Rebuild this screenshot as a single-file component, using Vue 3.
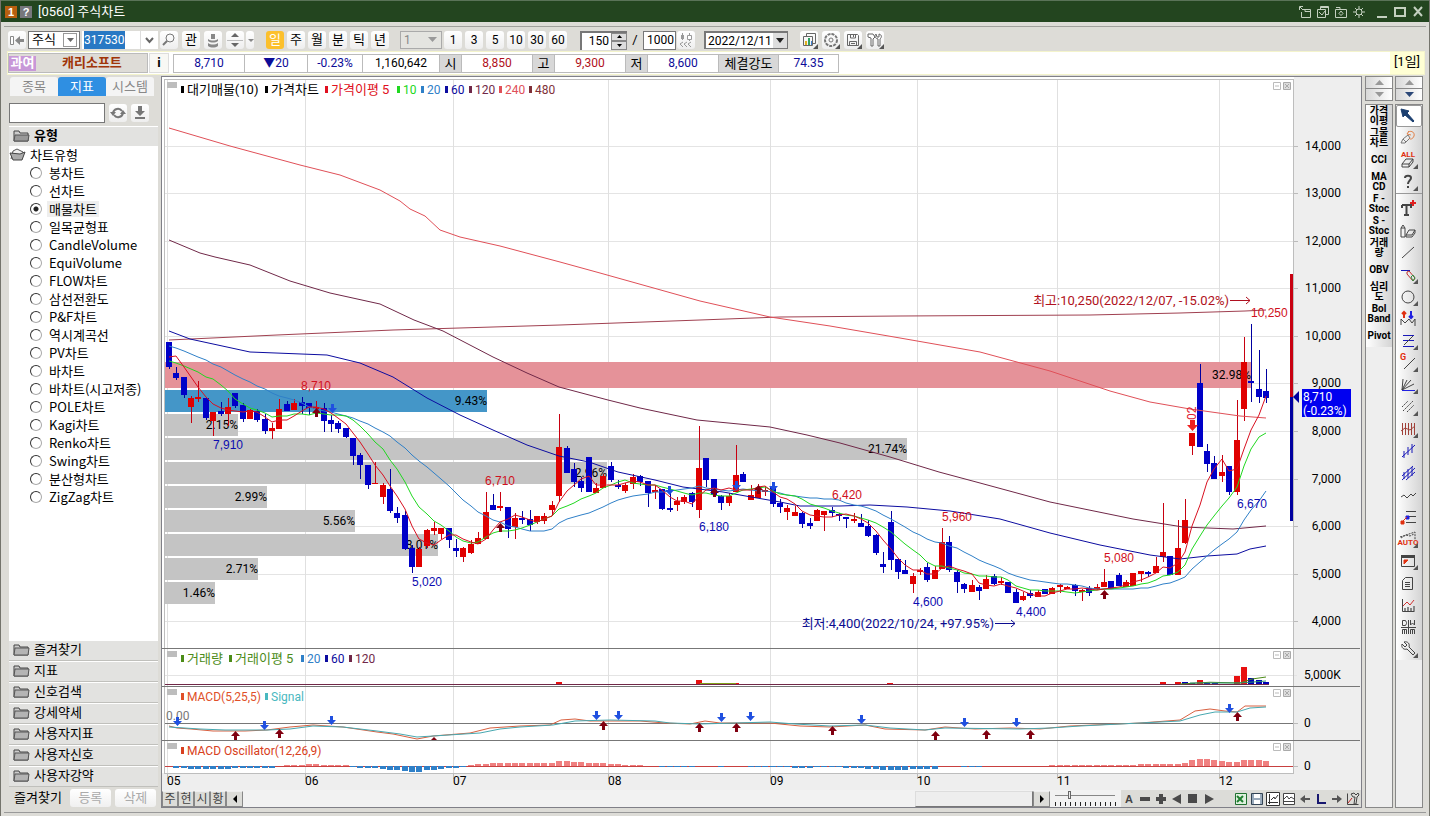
<script setup>
import { ref } from 'vue'

const code = ref('317530')
const market = ref('주식')
const minute = ref('1')
const count = ref('150')
const total = ref('1000')
const date = ref('2022/12/11')
const keyword = ref('')
const chartType = ref('매물차트')
const zoom = ref(14)

const periods = ['일', '주', '월', '분', '틱', '년']
const minutes = ['1', '3', '5', '10', '30', '60']

const quote = [
  { t: '8,710', w: 71, c: 'down' },
  { t: '▼20', w: 63, c: 'down' },
  { t: '-0.23%', w: 55, c: 'down' },
  { t: '1,160,642', w: 77, c: '' },
  { t: '시', w: 22, c: 'head' },
  { t: '8,850', w: 71, c: 'up' },
  { t: '고', w: 22, c: 'head' },
  { t: '9,300', w: 71, c: 'up' },
  { t: '저', w: 22, c: 'head' },
  { t: '8,600', w: 71, c: 'down' },
  { t: '체결강도', w: 60, c: 'head' },
  { t: '74.35', w: 59, c: 'down' },
]

const types = ['봉차트', '선차트', '매물차트', '일목균형표', 'CandleVolume', 'EquiVolume', 'FLOW차트', '삼선전환도', 'P&F차트', '역시계곡선', 'PV차트', '바차트', '바차트(시고저종)', 'POLE차트', 'Kagi차트', 'Renko차트', 'Swing차트', '분산형차트', 'ZigZag차트']
const folders = ['즐겨찾기', '지표', '신호검색', '강세약세', '사용자지표', '사용자신호', '사용자강약']
const quick = [['가격', '이평'], ['그물', '차트'], ['CCI'], ['MA', 'CD'], ['F -', 'Stoc'], ['S -', 'Stoc'], ['거래', '량'], ['OBV'], ['심리', '도'], ['Bol', 'Band'], ['Pivot']]

const G = '#444'
const R = '#e03010'
const B = '#1818b8'
const tools = [
  { n: '선택', s: [{ d: 'M3 3l8 2-2 2 7 8-1 1-8-7-2 2z', f: '#1c3f70', c: '#1c3f70' }] },
  { n: '지우기', s: [{ d: 'M3 15l2-4 5-4 2 3-5 5zM5 11l3 3', c: '#777' }, { d: 'M9 6l2-3M9 6l4 1M10 4c4-2 7 1 6 4s-4 4-5 2', c: '#e08048' }] },
  { n: '전체 지우기', m: 1, t: 'ALL', tc: R, ty: 7, ts: 8, s: [{ d: 'M4 14l4-5h7l-4 5zM4 14v3h7l4-5V9M11 14v3', c: G }] },
  { n: '도움말', m: 1, s: [{ d: 'M7 6c0-3 6-3 6 0 0 2-3 3-3 6M10 14v2', c: G, w: 2 }] },
  { n: '문자', sep: 1, s: [{ d: 'M4 6h9v3M4 9V6M8.500 6v10M6 16h5', c: G, w: 2 }, { d: 'M15 1v6M12 4h6', c: '#e02020', w: 2 }] },
  { n: '도형', s: [{ d: 'M3 7l2-3 2 3v9H3zM3 7h4', c: G }, { d: 'M8 14l3-5h6l-3 5zM8 14v2h6l3-4V9', c: G }] },
  { n: '추세선', s: [{ d: 'M4 15L16 4', c: G }] },
  { n: '수평선', m: 1, s: [{ d: 'M3 5.500h9', c: B }, { d: 'M9 7l2-1 6 7-2 3-6-7z', c: '#c03030' }, { d: 'M13 12l2-2 2 3-2 3z', c: '#309040' }] },
  { n: '원', m: 1, s: [{ d: 'M10 4a6 6 0 1 1 0 12a6 6 0 1 1 0-12', c: G }] },
  { n: '패턴', s: [{ d: 'M3 16v-6l4 4 4-4 3 4 3-4v7', c: G }, { d: 'M6 9V3M4 5l2-2 2 2', c: R, w: 2 }, { d: 'M13 2v7M11 7l2 2 2-2', c: '#2020e0', w: 2 }] },
  { n: '피보나치', m: 1, s: [{ d: 'M5 4.500h11M5 9.500h11M5 15.500h11', c: B }, { d: 'M15 5L6 14', c: G }] },
  { n: '갠 라인', m: 1, t: 'G', tc: R, ty: 7, tx: 5, ts: 9, s: [{ d: 'M6 16L17 5', c: G }] },
  { n: '갠 팬', m: 1, s: [{ d: 'M4 15L5 4M4 15l5-10M4 15L13 5M4 15l12-6', c: G }, { d: 'M4 15.500h13', c: '#2020e0' }] },
  { n: '평행선', m: 1, s: [{ d: 'M4 10l6-6M5 14L15 4M9 15l7-7', c: G, dash: '2 1' }] },
  { n: '시간대', m: 1, s: [{ d: 'M4.500 4v12M7.500 4v12M10.500 4v12M13.500 4v12M16.500 4v12M3 12l4-3 5 2 5-4', c: '#a04038' }] },
  { n: '회귀선', s: [{ d: 'M4 16L17 4M6 10v7M10 6v8M14 3v9', c: B }] },
  { n: '회귀채널', s: [{ d: 'M4 13L15 3M4 17L17 5M8 17l9-8M6 9v7M10 6v9M14 4v9', c: B }] },
  { n: '지그재그', s: [{ d: 'M3 12l3-2 3 3 4-4 2 2 3-3', c: G }] },
  { n: '분할선', s: [{ d: 'M8 4.500h10M10 9.500h8M8 15.500h10', c: G }, { d: 'M3 14h3v3H3z', f: R, c: R }, { d: 'M8 9h3v3H8z', f: '#2020e0', c: '#2020e0' }, { d: 'M5 14l4-4', c: R }] },
  { n: '자동추세', m: 1, t: 'AUTO', tc: R, ty: 16, ts: 8, s: [{ d: 'M2 8L17 3v8M3 9l5-3 4 1 4-2', c: G, dash: '2 1' }] },
  { n: '창', m: 1, s: [{ d: 'M3.500 4.500h13v11h-13z', c: G }, { d: 'M3 5.500h14', c: G, w: 3 }, { d: 'M6 9h4l-4 4z', f: R, c: R }] },
  { n: '메모', s: [{ d: 'M4.500 7.500l3-3h7v12h-10zM7 9.500h5M7 11.500h5M7 13.500h5', c: G }] },
  { n: '차트', s: [{ d: 'M4.500 4v12.500h12', c: G }, { d: 'M5 11l4-4 3 3 4-5', c: '#d03030' }, { d: 'M7 16v-3M10 16v-4M13 16v-3M16 16v-5', c: '#888', w: 2 }] },
  { n: '일주월분', s: [{ d: 'M4.500 3.500h3l1 2v1l-1 2h-3zM12.500 3v5l2-2 2 2V3M4.500 17v-4.500h4V17M6.500 13v4M12.500 17v-4.500h4V17M14.500 13v4M10.500 3v14M3 10.500h15', c: G }] },
  { n: '설정', m: 1, s: [{ d: 'M4 5l3 3 2-2-3-3c4-1 6 2 5 5l6 6-2 2-6-6c-3 1-6-1-5-5z', c: G }] },
]

/* colour, high, body top, body bottom, low (vertical positions on the sheet) */
const candles = `b342,342,367,369 b367,373,378,380 b377,377,395,398 r396,398,407,423 r381,397,399,402 b397,398,418,420 r412,412,421,436 b402,411,414,416 r398,407,414,426 b393,393,406,408
b403,405,419,422 r409,410,419,419 b409,411,420,422 b414,419,431,434 r423,428,431,439 r399,409,429,429 b401,404,411,411 r399,403,410,410 b397,402,406,414 b403,403,408,415
r401,407,409,412 b403,408,421,432 b415,420,424,432 b421,423,429,433 b428,428,437,438 b438,438,456,465 b453,455,465,479 b465,465,485,489 r462,483,484,484 r483,485,497,504
b469,489,511,513 b507,513,518,523 b511,515,549,550 b545,548,567,573 r547,549,567,567 r529,530,546,548 r522,528,531,535 r528,528,534,539 b528,528,540,548 b539,548,551,557
r547,548,557,562 r540,544,553,554 r532,538,544,544 r492,512,539,539 b494,505,510,510 r492,506,508,511 b507,507,529,538 r513,518,527,539 b511,518,520,524 b510,519,525,531
r516,516,522,524 r513,516,521,524 r501,505,510,515 r414,447,496,502 b446,448,473,473 b463,469,482,487 b477,481,488,492 b457,457,492,492 r483,488,493,493 r474,476,488,488
b462,466,480,482 b480,485,487,489 r483,485,491,493 r474,477,484,489 b475,476,482,486 b481,481,493,507 r485,490,492,499 b489,489,509,510 b492,508,510,512 r497,501,505,511
r495,497,502,504 b492,493,502,507 r426,468,510,518 b458,458,480,487 b479,479,495,497 b495,496,503,510 r493,496,503,506 r445,475,492,492 b472,474,482,482 r485,495,500,500
r484,488,498,498 r486,490,492,496 b487,487,504,507 b499,503,507,513 r505,508,512,520 r506,512,516,516 b512,513,524,528 b518,523,526,529 r509,510,521,521 r511,511,515,531
b507,510,513,517 b513,514,516,521 b517,517,519,528 r513,519,521,523 b514,523,527,527 b520,526,536,537 b534,535,553,555 b552,564,567,573 b511,522,560,570 b558,559,572,579
b560,570,574,574 r573,576,584,593 r568,570,572,575 b563,567,580,582 r566,570,579,579 r528,542,569,569 b536,542,570,572 b570,572,582,593 b583,584,589,593 r580,585,592,592
b585,587,591,600 r575,579,589,589 b574,576,584,585 r577,581,583,585 b582,582,593,593 b589,592,603,603 r592,596,600,601 b590,593,596,598 r590,592,597,597 b589,589,594,594
r587,588,594,594 r584,585,587,593 r586,587,589,589 b584,585,591,596 r589,590,592,601 b586,588,593,596 r584,587,589,590 r569,582,587,587 b581,581,589,589 b573,575,586,586
r580,582,587,587 r573,573,586,586 r571,571,574,582 b571,572,574,577 r557,566,573,573 r503,552,557,562 b556,556,575,575 r520,548,575,575 r499,520,543,544 r433,433,446,455
b364,383,447,447 b444,451,464,472 b456,463,479,479 r455,472,476,482 b466,466,492,495 r400,440,492,495 r337,362,409,421 b324,381,383,402 b350,389,397,403 b369,391,398,403`
  .split(/\s+/)
  .map((s, i) => {
    const [h, o, c, l] = s.slice(1).split(',').map(Number)
    return { x: Math.round(169 + i * 7.3624), up: s[0] === 'r', h, o, c, l }
  })

const closes = candles.map((k) => (k.up ? k.o : k.c))
function average(n, head) {
  return closes
    .map((_, i) => {
      const y = i < n - 1 ? head[i] : closes.slice(i - n + 1, i + 1).reduce((a, b) => a + b, 0) / n
      return `${candles[i].x},${Math.round(y)}`
    })
    .join(' ')
}
const lines = [
  { c: '#a04050', p: '169,340 277,335 393,330 560,325 700,320 780,317 900,316 1090,315 1180,313 1245,311 1266,310' },
  { c: '#e05058', p: '169,128 230,146 300,165 340,175 380,190 400,201 410,209 425,216 440,230 460,237 500,246 560,262 600,273 650,287 700,301 770,317 830,326 900,338 980,352 1050,371 1110,391 1150,402 1190,409 1240,416 1266,418' },
  { c: '#702848', p: '169,240 200,253 215,257 250,265 290,281 330,293 380,304 414,320 443,331 493,357 527,373 559,387 608,400 640,408 697,420 770,427 807,435 840,443 890,457 939,472 980,483 1050,502 1133,519 1183,527 1233,529 1266,526' },
  { c: '#0c0ca0', p: '169,331 190,339 250,352 327,355 360,363 393,377 427,398 460,415 493,430 527,445 559,456 589,462 618,472 655,480 683,487 723,492 757,498 780,502 800,506 840,506 870,505 907,507 950,511 1000,519 1050,533 1100,545 1150,555 1180,559 1207,556 1237,554 1250,549 1266,546' },
  { c: '#2f80c8', p: average(20, [346, 348, 351, 354, 357, 360, 364, 367, 371, 375, 379, 382, 386, 389, 393, 396, 398, 400, 403]) },
  { c: '#20d820', p: average(10, [361, 363, 366, 369, 372, 377, 379, 385, 391]) },
  { c: '#d81020', p: average(5, [357, 356, 367, 377]) },
]

const profile = [
  { y: 362, h: 26, x: 1251, t: '32.98%', c: '#e59299' },
  { y: 390, h: 22, x: 487, t: '9.43%', c: '#4496c8' },
  { y: 414, h: 22, x: 238, t: '2.15%' },
  { y: 438, h: 22, x: 907, t: '21.74%' },
  { y: 462, h: 22, x: 607, t: '2.96%' },
  { y: 486, h: 22, x: 267, t: '2.99%' },
  { y: 510, h: 22, x: 355, t: '5.56%' },
  { y: 534, h: 22, x: 438, t: '8.01%' },
  { y: 558, h: 22, x: 258, t: '2.71%' },
  { y: 582, h: 22, x: 215, t: '1.46%' },
]

const prices = Array.from({ length: 11 }, (_, i) => ({
  y: Math.round(145.5 + i * 47.58),
  t: `${14 - i},000`,
}))
const months = [[167, '05'], [305, '06'], [453, '07'], [608, '08'], [770, '09'], [917, '10'], [1057, '11'], [1219, '12']]

const legends = [
  [183, 94, '#000', '대기매물(10)', 1], [267, 94, '#000', '가격차트', 1], [327, 94, '#e01020', '가격이평  5', 1], [399, 94, '#20d820', '10'], [423, 94, '#2f80c8', '20'], [447, 94, '#0c0ca0', '60'], [471, 94, '#702848', '120'], [501, 94, '#e05058', '240'], [531, 94, '#803038', '480'],
  [183, 663, '#4c8c18', '거래량', 1], [231, 663, '#4c8c18', '거래이평  5', 1], [303, 663, '#2f80c8', '20'], [327, 663, '#0c0ca0', '60'], [351, 663, '#702848', '120'],
  [183, 701, '#e05028', 'MACD(5,25,5)'], [267, 701, '#48b8c0', 'Signal'],
  [183, 755, '#d84020', 'MACD Oscillator(12,26,9)'],
]

const tags = [
  [301, 390, 'hi', '8,710'], [213, 449, 'lo', '7,910'], [412, 586, 'lo', '5,020'], [485, 485, 'hi', '6,710'],
  [699, 531, 'lo', '6,180'], [832, 499, 'hi', '6,420'], [942, 521, 'hi', '5,960'], [913, 606, 'lo', '4,600'],
  [1016, 616, 'lo', '4,400'], [1104, 562, 'hi', '5,080'], [1237, 508, 'lo', '6,670'], [1251, 317, 'hi', '10,250'],
]

const downs = [[177, 721], [264, 725], [331, 720], [596, 715], [618, 715], [721, 717], [750, 716], [861, 719], [964, 722], [1016, 722], [1229, 708], [332, 408], [669, 490], [736, 485], [773, 486]]
const ups = [[235, 736], [279, 734], [603, 726], [699, 728], [736, 728], [832, 731], [935, 736], [986, 735], [1030, 735], [1237, 717], [316, 413], [500, 528], [714, 493], [758, 490], [1104, 595]]

const volumes = [[559, 682, 1], [699, 680, 1], [736, 683, 1], [890, 683, 1], [1163, 682, 1], [1178, 682, 1], [1185, 682, 0], [1192, 683, 0], [1200, 680, 1], [1207, 683, 0], [1215, 683, 0], [1237, 676, 1], [1244, 667, 1], [1251, 678, 0], [1259, 680, 0], [1266, 682, 0]]

const macd = '169,726 177,728 191,729 213,731 245,731 267,730 290,727 313,725 343,727 377,732 393,734 417,739 433,736 470,733 490,728 520,726 550,725 561,720 575,719 590,721 640,721 665,723 690,724 705,721 720,723 770,723 800,726 830,727 865,725 885,729 925,730 945,727 975,729 1010,728 1040,729 1070,726 1140,723 1180,720 1195,711 1210,709 1225,711 1237,712 1245,706 1266,706'
const signal = '169,727 200,729 225,730 267,730 290,729 313,726 343,727 377,731 400,734 417,737 433,736 480,733 500,729 520,727 553,725 575,721 610,720 655,721 670,723 700,724 770,722 795,724 830,726 865,725 890,728 925,730 945,728 1020,729 1050,728 1080,726 1140,723 1180,721 1200,715 1215,712 1237,712 1250,708 1266,707'

const osc = [0, -2, -2, -3, -3, -3, -3, -3, -3, -2, -2, -2, -2, -2, -2, 0, 1, 1, 1, 2, 2, 1, 1, 1, 1, -1, -2, -2, -2, -3, -4, -4, -5, -6, -6, -4, -4, -3, -2, -2, -1, 1, 2, 2, 3, 3, 3, 3, 3, 3, 3, 3, 3, 5, 5, 4, 4, 3, 3, 3, 2, 2, 1, 1, 1, 0, 0, -1, -1, -1, -1, -1, 0, 0, 0, -1, 0, 0, 0, -1, -1, -1, -1, -1, -1, -2, -2, -2, -1, -1, -1, -1, -2, -2, -2, -3, -3, -4, -4, -4, -4, -3, -3, -3, -3, 0, 0, 0, -1, -1, -1, 0, 0, 0, 0, 0, 0, 0, 0, 0, 1, 1, 1, 1, 1, 1, 1, 1, 1, 1, 1, 1, 2, 2, 2, 2, 2, 2, 3, 6, 7, 7, 6, 5, 4, 4, 6, 6, 6, 5]
const panes = [79, 648, 686, 740]
</script>

<template>
  <div class="window">
    <header class="title">
      <span class="mark">1</span><span class="mark help">?</span>
      <h1>[0560] 주식차트</h1>
      <div class="winbtns">
        <button aria-label="창 분리"><svg width="14" height="14"><path d="M4.500 4.500h8v8h-9V7M7 4v2.500h5M1.500 5V1.500H5M2 2l3 3" /></svg></button>
        <button aria-label="창 복사"><svg width="14" height="14"><path d="M1.500 4.500h8v8h-8zM4.500 4V1.500h8v8H10M3 7l3 3 3-4M4 2.500h8" /></svg></button>
        <button aria-label="캡처"><svg width="14" height="14"><path d="M1.500 4.500h11v8h-11zM2 2.500h4v2M7 6l2 2.500-2 2-2-2z" /></svg></button>
        <button aria-label="설정"><svg width="14" height="14"><path d="M7 4a3 3 0 1 1 0 6a3 3 0 1 1 0-6M7 1v3M7 10v3M1 7h3M10 7h3M3 3l2 2M9 9l2 2M3 11l2-2M9 5l2-2" /></svg></button>
        <button aria-label="최소화" class="big"><svg width="14" height="14"><path d="M2 12h10" stroke-width="2" /></svg></button>
        <button aria-label="최대화" class="big"><svg width="14" height="14"><path d="M2 3h10v8H2z" stroke-width="2" /></svg></button>
        <button aria-label="닫기" class="big"><svg width="14" height="14"><path d="M3 2l8 9M11 2l-8 9" stroke-width="2" /></svg></button>
      </div>
    </header>

    <div class="toolbar">
      <button class="tb" aria-label="처음"><svg width="16" height="14"><path d="M1.500 3.500h3v8h-3z" fill="#fff" stroke="#888" /><path d="M6 7.500L11 3v3h4v3h-4v3z" fill="#888" /></svg></button>
      <span class="pick market"><select v-model="market" aria-label="시장"><option>주식</option></select><i class="boxed"><svg width="9" height="5"><path d="M1 0h7L4.500 4z" fill="#666" /></svg></i></span>
      <span class="combo"><input v-model="code" aria-label="종목코드"><button aria-label="코드 목록"><svg width="9" height="7"><path d="M1 1l3.500 4L8 1" fill="none" stroke="#666" stroke-width="2" /></svg></button></span>
      <button class="tb" aria-label="검색"><svg width="14" height="14"><circle cx="8" cy="5" r="4" fill="none" stroke="#777" /><path d="M5 8l-4 4" stroke="#777" stroke-width="2" /></svg></button>
      <button class="tb gap">관</button>
      <button class="tb gap" aria-label="투자자"><svg width="14" height="16"><path d="M5 2h4v5H5zM2 7c3 2 7 2 10 0v2c-3 2-7 2-10 0zM2 11c3 2 7 2 10 0v3c-3 2-7 2-10 0z" fill="#888" /></svg></button>
      <button class="tb gap" aria-label="종목 이동"><svg width="16" height="18"><path d="M4 6l4-4 4 4zM4 12l4 4 4-4z" fill="#666" /><path d="M0 9.500h16" stroke="#bbb" /></svg></button>
      <button class="tb slim" aria-label="이동 목록"><svg width="7" height="5"><path d="M1 1h6L4 4z" fill="#888" /></svg></button>
      <div class="group periods">
        <button v-for="(p, i) in periods" :key="p" class="tb" :class="{ on: i === 0 }">{{ p }}</button>
      </div>
      <span class="pick minute"><select v-model="minute" aria-label="분 간격" disabled><option>1</option></select><i><svg width="9" height="6"><path d="M0 0h9L4.500 5z" fill="#999" /></svg></i></span>
      <div class="group mins">
        <button v-for="m in minutes" :key="m" class="tb">{{ m }}</button>
      </div>
      <span class="spin"><input v-model="count" aria-label="표시 개수"><span class="steps"><button aria-label="증가"><svg width="5" height="3"><path d="M0 3h5L2.500 0z" /></svg></button><button aria-label="감소"><svg width="5" height="3"><path d="M0 0h5L2.500 3z" /></svg></button></span></span>
      <span class="slash">/</span>
      <input v-model="total" class="total" aria-label="전체 개수">
      <button class="tb" aria-label="연속조회"><svg width="14" height="16"><path d="M3.500 1v7M10.500 1v8" stroke="#999" /><path d="M2 3h3v4H2z" fill="#999" /><path d="M8.500 3.500h4v4h-4z" fill="#fff" stroke="#999" /><path d="M4 10l-3 2 3 3M8 10l-3 2 3 3M12 10l-3 2 3 3" fill="none" stroke="#999" /></svg></button>
      <span class="pick date"><select v-model="date" aria-label="날짜"><option>2022/12/11</option></select><i><svg width="8" height="5"><path d="M0 0h8L4 5z" fill="#222" /></svg></i></span>
      <div class="group extras">
        <button class="tb" aria-label="차트 복사"><svg width="17" height="17"><path d="M5.500 4V1.500h9v10H12M2.500 4.500h9v9h-9z" fill="none" stroke="#666" /><path d="M4 9h2v4H4z" fill="#e0b020" /><path d="M7 6h2v7H7z" fill="#30a060" /><path d="M10 9h1v4h-1z" fill="#4080d0" /><path d="M17 12v5h-5z" fill="#555" /></svg></button>
        <button class="tb" aria-label="환경설정"><svg width="17" height="17"><circle cx="8" cy="8" r="6" fill="none" stroke="#777" stroke-width="2" stroke-dasharray="3 1" /><circle cx="8" cy="8" r="2" fill="none" stroke="#777" /><path d="M17 12v5h-5z" fill="#555" /></svg></button>
        <button class="tb" aria-label="저장"><svg width="17" height="17"><path d="M2.500 2.500h10l1 1v10h-11zM5.500 2v4h5V2M4.500 14V9.500h7V14M8.500 3v2M6 11.500h4" fill="none" stroke="#666" /><path d="M17 12v5h-5z" fill="#555" /></svg></button>
        <button class="tb" aria-label="도구"><svg width="17" height="17"><path d="M1 2h5l2 3-2 2v7H4V6L1 5zM9 2l1 3h2V2c3 1 3 3 1 5v7h-2V7C8 6 7 4 9 2z" fill="#fff" stroke="#666" /><path d="M17 12v5h-5z" fill="#555" /></svg></button>
      </div>
    </div>

    <div class="quote">
      <div class="stock"><span class="badge">과여</span><strong>캐리소프트</strong></div>
      <button class="info" aria-label="종목정보">i</button>
      <div class="cells">
        <span v-for="q in quote" :key="q.t" :class="q.c" :style="{ width: q.w + 'px' }">{{ q.t }}</span>
      </div>
      <span class="unit">[1일]</span>
    </div>

    <main class="main">
      <aside class="side">
        <nav class="tabs"><button>종목</button><button class="on">지표</button><button>시스템</button></nav>
        <div class="find">
          <input v-model="keyword" aria-label="지표 찾기">
          <button class="tb" aria-label="새로고침"><svg width="16" height="14"><path d="M3 7a5 5 0 0 1 9-2M13 7a5 5 0 0 1-9 2" fill="none" stroke="#777" stroke-width="2" /><path d="M0 6h6L3 10zM10 8h6l-3-4z" fill="#777" /></svg></button>
          <button class="tb" aria-label="내려받기"><svg width="14" height="16"><path d="M5 1h4v5h3l-5 5-5-5h3zM2 12h10v2H2z" fill="#777" /></svg></button>
        </div>
        <h2 class="bar"><svg width="17" height="13"><path d="M1 12V2h5l1 2h8v8z" fill="#ccc" stroke="#444" /><path d="M1 12l1-6h14l-1 6z" fill="#999" stroke="#555" /></svg>유형</h2>
        <div class="tree">
          <div class="root"><svg width="17" height="14"><path d="M2 11l2-8 4-2 6 3v4" fill="#eee" stroke="#555" /><path d="M1 5l10 1 5-2-3 8H4z" fill="#aaa" stroke="#444" /></svg>차트유형</div>
          <label v-for="t in types" :key="t" class="opt"><input v-model="chartType" type="radio" name="type" :value="t"><span :class="{ sel: chartType === t }">{{ t }}</span></label>
        </div>
        <button v-for="f in folders" :key="f" class="bar"><svg width="17" height="13"><path d="M1 12V2h5l1 2h8v8z" fill="#ccc" stroke="#444" /><path d="M1 12l1-7h14l-1 7z" fill="#b4b4b4" stroke="#555" /></svg>{{ f }}</button>
        <div class="foot"><span>즐겨찾기</span><button disabled>등록</button><button disabled>삭제</button></div>
      </aside>

      <section class="chart">
        <svg class="sheet" viewBox="162 77 1199 713" role="img" aria-label="캐리소프트 일봉 차트">
          <rect x="162" y="77" width="1199" height="713" fill="#eee" />
          <rect x="162" y="77" width="1132" height="696" fill="#fff" />
          <g shape-rendering="crispEdges" fill="none">
            <path v-for="p in prices" :key="p.t" :d="`M165 ${p.y}.5H1293`" stroke="#e4e4e4" />
            <path d="M165 675.5H1297" stroke="#e4e4e4" />
            <path v-for="m in months" :key="m[1]" :d="`M${m[0]}.5 80V773`" stroke="#e0e0e0" />
            <path v-for="p in prices" :key="'k' + p.t" :d="`M1293 ${p.y}.5h5`" stroke="#bbb" />
            <path v-for="m in months" :key="'k' + m[1]" :d="`M${m[0]}.5 773v6`" stroke="#bbb" />
            <path d="M164.500 773V79.500H1293.500V773.500H164" stroke="#bdbdbd" />
            <path d="M1293 723.5h5M1293 766.5h5" stroke="#bbb" />
          </g>
          <g class="num" text-anchor="end">
            <template v-for="b in profile" :key="b.t">
              <rect x="165" :y="b.y" :width="b.x - 165" :height="b.h" :fill="b.c || '#c4c4c4'" />
              <text :x="b.x" :y="b.y + (b.h > 22 ? 17 : 15)">{{ b.t }}</text>
            </template>
            <text v-for="p in prices" :key="p.t" x="1341" :y="p.y + 4">{{ p.t }}</text>
          </g>
          <g class="num">
            <text v-for="m in months" :key="m[1]" :x="m[0]" y="785">{{ m[1] }}</text>
            <text x="1304" y="679">5,000K</text>
            <text x="1304" y="727">0</text>
            <text x="1304" y="770">0</text>
          </g>
          <g shape-rendering="crispEdges">
            <template v-for="k in candles" :key="k.x">
              <rect :x="k.x" :y="k.h" width="1" :height="k.l - k.h" :fill="k.up ? '#c80010' : '#0000a0'" />
              <rect :x="k.x - 3" :y="k.o" width="6" :height="Math.max(1, k.c - k.o)" :fill="k.up ? '#e00000' : '#0000c8'" />
            </template>
          </g>
          <polyline v-for="l in lines" :key="l.c" :points="l.p" :stroke="l.c" class="line" />
          <g class="tag">
            <text v-for="t in tags" :key="t[3]" :x="t[0]" :y="t[1]" :class="t[2]">{{ t[3] }}</text>
          </g>
          <g class="num wide">
            <text x="1229" y="305" text-anchor="end" fill="#b01020">최고:10,250(2022/12/07, -15.02%)</text>
            <text x="994" y="628" text-anchor="end" fill="#0c0c90">최저:4,400(2022/10/24, +97.95%)</text>
          </g>
          <path d="M1230 300.500h20M1246 297l4 3.500-4 3.500" stroke="#b01020" fill="none" />
          <path d="M995 623.500h20M1011 620l4 3.500-4 3.500" stroke="#0c0c90" fill="none" />
          <text class="num" transform="translate(1196 420) rotate(-90)" fill="#e02030">02</text>
          <path d="M1190 420h5v5h3l-5.500 6-5.500-6h3z" fill="#f02020" />
          <rect x="1290" y="274" width="3" height="123" fill="#c80010" />
          <rect x="1290" y="397" width="3" height="124" fill="#0000a0" />
          <path d="M1293 397l6-6v12z" fill="#0000a0" />
          <rect x="1302" y="389" width="49" height="28" fill="#0000f0" />
          <g class="num" fill="#fff"><text x="1303" y="401">8,710</text><text x="1303" y="415">(-0.23%)</text></g>

          <g shape-rendering="crispEdges">
            <rect v-for="v in volumes" :key="v[0]" :x="v[0] - 3" :y="v[1]" width="6" :height="685 - v[1]" :fill="v[2] ? '#e81010' : '#0000b8'" />
            <path d="M165 684.500H1269" stroke="#702848" />
            <path d="M165 723.500H1293" stroke="#777" />
            <path d="M165 766.500H1293" stroke="#c84040" />
            <rect v-for="(o, i) in osc" :key="i" :x="candles[i].x - 3" :y="o > 0 ? 766 - o : 766" width="6" :height="Math.abs(o)" :fill="o > 0 ? '#f08080' : '#2f80c8'" />
          </g>
          <path d="M1180 684q30-3 60-1l12-4 14-2" fill="none" stroke="#4c8c18" />
          <path d="M700 683.500h36" stroke="#80a018" />
          <path d="M1190 683h50l26-2" fill="none" stroke="#2a9070" />
          <polyline :points="macd" stroke="#d86040" class="line" />
          <polyline :points="signal" stroke="#48a8b0" class="line" />
          <text class="num" x="166" y="720" fill="#777">0.00</text>
          <path v-for="d in downs" :key="'d' + d" :d="`M${d[0] - 1} ${d[1] - 4}h3v4h3l-4.500 5-4.500-5h3z`" fill="#2050e0" />
          <path v-for="u in ups" :key="'u' + u" :d="`M${u[0] - 1} ${u[1] + 4}h3v-4h3l-4.500-5-4.500 5h3z`" fill="#800010" />
          <path d="M431 740l3-3 3 3z" fill="#800010" />
          <path d="M162 648.500H1360M162 686.500H1360M162 740.500H1360" stroke="#777" shape-rendering="crispEdges" />
          <g v-for="y in panes" :key="y">
            <rect x="167" :y="y + 3" width="10" height="6" fill="#bdbdbd" />
            <path :d="`M1273.500 ${y + 3.5}h7v7h-7zM1275 ${y + 7}h4`" fill="none" stroke="#bbb" />
            <path :d="`M1283.500 ${y + 3.5}h7v7h-7zM1285 ${y + 5}l4 4m0-4l-4 4`" fill="#ddd" stroke="#aaa" />
          </g>
          <g class="num">
            <template v-for="l in legends" :key="l[0] + l[3]">
              <rect :x="l[0] - 2" :y="l[1] - 8" width="3" height="7" :fill="l[2]" />
              <text :x="l[0] + 4" :y="l[1]" :fill="l[2]" :class="{ wide: l[4] }">{{ l[3] }}</text>
            </template>
          </g>
        </svg>

        <div class="strip">
          <button v-for="s in ['주', '현', '시', '황']" :key="s">{{ s }}</button>
          <button class="arrow" aria-label="왼쪽"><svg width="4" height="8"><path d="M4 0v8L0 4z" /></svg></button>
          <div class="track"><div class="thumb"></div></div>
          <button class="arrow" aria-label="오른쪽"><svg width="4" height="8"><path d="M0 0v8l4-4z" /></svg></button>
          <div class="ruler"><input v-model="zoom" type="range" min="0" max="60" aria-label="확대"></div>
          <div class="ctrl">
            <button>A</button>
            <button aria-label="축소"><svg width="12" height="12"><path d="M1 4h10v4H1z" fill="#4a4a4a" /></svg></button>
            <button aria-label="확대"><svg width="12" height="12"><path d="M4 1h4v3h3v4H8v3H4V8H1V4h3z" fill="#4a4a4a" /></svg></button>
            <button aria-label="이전"><svg width="12" height="12"><path d="M10 1v10L1 6z" fill="#4a4a4a" /></svg></button>
            <button aria-label="정지"><svg width="12" height="12"><path d="M1 1h9v9H1z" fill="#4a4a4a" /></svg></button>
            <button aria-label="다음"><svg width="12" height="12"><path d="M2 1v10l9-5z" fill="#4a4a4a" /></svg></button>
          </div>
          <div class="ctrl">
            <button aria-label="엑셀"><svg width="14" height="14"><path d="M1.500 1.500h11v11h-11z" fill="#dff0df" stroke="#207030" /><path d="M3 4l6 6M9 4l-6 6" stroke="#208030" stroke-width="2" /></svg></button>
            <button aria-label="저장"><svg width="14" height="14"><path d="M1.500 1.500h11v11h-11z" fill="#9ab" stroke="#345" /><path d="M4 2h6v4H4zM4 8h6v4H4z" fill="#fff" /></svg></button>
            <button aria-label="십자선"><svg width="14" height="14"><path d="M.5.500h13v13H.500z" fill="#fff" stroke="#333" /><path d="M3.500 2v10M2 10.500h10M5 8l3-3 1 2 3-4" fill="none" stroke="#333" /></svg></button>
            <button aria-label="차트틀"><svg width="14" height="14"><path d="M1.500 1.500h11v11h-11z" fill="#fff" stroke="#444" /><path d="M2 7l3-3 2 3 2-2 3 2M2 9.500h10" fill="none" stroke="#444" /></svg></button>
            <button aria-label="왼쪽으로"><svg width="14" height="14"><path d="M2 7l5-4v3h5v2H7v3z" fill="#555" /></svg></button>
            <button aria-label="로그"><svg width="14" height="14"><path d="M4 2v9h8" fill="none" stroke="#181870" stroke-width="2" /></svg></button>
            <button aria-label="오른쪽으로"><svg width="14" height="14"><path d="M12 7L7 3v3H2v2h5v3z" fill="#555" /></svg></button>
            <button aria-label="차트 설정"><svg width="14" height="14"><path d="M1.500 1.500v11h11M5 2l2 3h2l-1 7h2l1-7 2-2-1-2-2 2-2-2z" fill="none" stroke="#444" /><path d="M2 11l4-5" stroke="#c02020" /></svg></button>
          </div>
        </div>
      </section>

      <aside class="rail">
        <div class="step"><button aria-label="위로"><svg width="9" height="5"><path d="M0 5h9L4.500 0z" fill="#999" /></svg></button><button aria-label="아래로"><svg width="9" height="5"><path d="M0 0h9L4.500 5z" fill="#999" /></svg></button></div>
        <div class="list"><button v-for="q in quick" :key="q.join()" class="q"><span v-for="w in q" :key="w">{{ w }}</span></button></div>
      </aside>
      <aside class="rail">
        <div class="step"><button aria-label="위로"><svg width="9" height="5"><path d="M0 5h9L4.500 0z" fill="#999" /></svg></button><button aria-label="아래로"><svg width="9" height="5"><path d="M0 0h9L4.500 5z" fill="#2c4878" /></svg></button></div>
        <div class="list">
          <button v-for="(t, i) in tools" :key="t.n" class="t" :class="{ on: i === 0, sep: t.sep }" :aria-label="t.n">
            <svg width="24" height="20" viewBox="-1 0 24 20">
              <path v-for="(s, j) in t.s" :key="j" :d="s.d" :fill="s.f || 'none'" :stroke="s.c" :stroke-width="s.w || 1" :stroke-dasharray="s.dash" />
              <text v-if="t.t" :x="t.tx || 10" :y="t.ty" :font-size="t.ts" :fill="t.tc" text-anchor="middle" font-weight="bold">{{ t.t }}</text>
              <path v-if="t.m" d="M20 14v5h-5z" fill="#555" />
            </svg>
          </button>
        </div>
      </aside>
    </main>
  </div>
</template>

<style>
body { background: #ddddd8; }
</style>

<style scoped>
.window {
  --kr: Roboto, "Noto Sans CJK KR", sans-serif;
  box-sizing: border-box;
  min-height: 100vh;
  display: flex;
  flex-direction: column;
  border-left: 1px solid #74746c;
  border-right: 1px solid #74746c;
  border-bottom: 2px solid #74746c;
  background: #dddcd7;
  font: 13px/16px var(--kr);
  color: #000;
}
.window *, .window *::before { box-sizing: border-box; }
button, input, select { font: inherit; color: inherit; margin: 0; padding: 0; border: 0; }
button { display: flex; align-items: center; justify-content: center; white-space: nowrap; background: none; }
svg { display: block; flex: none; }
i { font-style: normal; }

.title { height: 22px; display: flex; align-items: center; gap: 3px; padding: 0 6px 0 4px; background: #23451f; border-top: 1px solid #5a7358; color: #fff; }
.mark { width: 12px; height: 12px; background: #b86010; font: bold 11px/12px "Liberation Sans", sans-serif; text-align: center; }
.help { background: #77777c; }
.title h1 { margin: 0 0 0 3px; font-size: 13px; font-weight: 400; }
.winbtns { margin-left: auto; display: flex; gap: 4px; }
.winbtns svg { fill: none; stroke: #c4d0c0; }
.winbtns .big { margin-left: 2px; margin-right: -2px; }
.winbtns .big:nth-child(5) { margin-left: 5px; }

.toolbar { height: 25px; margin: 4px 3px 0; padding: 2px 4px 0; display: flex; align-items: center; border-top: 1px solid #a0a09c; }
.tb { width: 18px; height: 18px; border-radius: 3px; background: linear-gradient(#fff, #eee); }
.tb.gap { margin-left: 4px; }
.tb.slim { width: 8px; margin-left: 2px; }
.tb.on { background: #fcc02c; color: #fff; }
.group { display: flex; gap: 3px; }
.periods { margin-left: 12px; }
.mins { margin-left: 2px; font-size: 12px; }
.extras { margin-left: 12px; gap: 4px; }
.pick { display: flex; position: relative; height: 18px; background: #fff; border: 1px solid #777; }
.pick select { appearance: none; width: 100%; padding-left: 3px; background: none; color: #000; opacity: 1; }
.pick i { position: absolute; right: 2px; top: 1px; bottom: 1px; width: 14px; display: flex; align-items: center; justify-content: center; pointer-events: none; }
.pick .boxed { border: 1px solid #999; }
.market { width: 52px; margin: 0 2px; }
.minute { width: 42px; margin-left: 11px; background: #e4e4e0; border-color: #aaa; }
.minute select { color: #888; font-size: 12px; }
.date { width: 84px; margin-left: 9px; border-width: 2px 1px 1px 2px; }
.date select { padding-left: 2px; font-size: 12px; }
.date i { background: #ddd; top: 0; bottom: 0; right: 0; }
.combo { display: flex; width: 76px; height: 18px; margin-right: 2px; background: #fff; }
.combo input { width: 58px; padding-left: 2px; background: linear-gradient(to right, #fff 2px, #2878c4 2px 43px, #fff 43px); color: #fff; font-size: 12px; }
.combo button { width: 18px; border-left: 1px solid #ddd; }
.spin { display: flex; width: 47px; height: 19px; margin-left: 13px; border: 1px solid #777; border-width: 2px 0 0 2px; background: #fff; font-size: 12px; }
.spin input { width: 27px; text-align: right; background: none; }
.steps { width: 16px; margin-left: 2px; display: flex; flex-direction: column; }
.steps button { flex: 1; background: #ddd; border: 1px solid #888; }
.slash { width: 16px; text-align: center; }
.total { width: 33px; height: 19px; padding-left: 3px; background: #fff; border: 1px solid #777; margin-right: 1px; font-size: 12px; }

.quote { height: 24px; margin: 0 4px 0 6px; display: flex; align-items: center; background: #fff; border: 1px solid #f4f4cc; }
.stock { width: 140px; height: 20px; display: flex; align-items: center; background: #dedcd7; border: 1px solid #bbb; color: #a03408; }
.badge { width: 27px; height: 15px; background: #c898d8; color: #fff; font-weight: bold; line-height: 14px; text-align: center; }
.stock strong { margin-left: 26px; font-size: 13px; }
.info { width: 20px; height: 20px; margin-left: 1px; font-weight: bold; background: #f8f8f4; border: 1px solid #ddd; }
.cells { display: flex; margin-left: 4px; border: 1px solid #bbb; font-size: 12px; }
.cells span { height: 17px; line-height: 17px; text-align: center; border-right: 1px solid #bbb; }
.cells span:last-child { border-right: 0; }
.cells .down { color: #0c0c98; }
.cells .up { color: #b01020; }
.cells .head { background: #d8d8d8; font-size: 13px; }
.unit { align-self: stretch; margin-left: auto; width: 34px; background: #ffffd4; line-height: 20px; text-align: center; }

.main { flex: 1; display: flex; margin: 1px 3px 3px; padding: 0 3px 4px 5px; border-bottom: 1px solid #999; }
.side { width: 149px; display: flex; flex-direction: column; }
.tabs { display: flex; height: 19px; margin: 1px 4px 0 1px; }
.tabs button { flex: 1; background: #f4f4f4; color: #888; border-radius: 3px 3px 0 0; }
.tabs .on { background: #2f8fe2; color: #fff; }
.find { display: flex; gap: 4px; margin: 7px 0 3px; align-items: center; }
.find input { width: 96px; height: 20px; background: #fff; border: 1px solid #777; padding: 0 3px; }
.bar { width: 100%; height: 21px; margin: 0; display: flex; align-items: center; justify-content: flex-start; gap: 4px; padding: 0 0 2px 4px; background: #e2e2e0; border-top: 1px solid #fff; border-bottom: 1px solid #c0c0bc; font-size: 13px; }
h2.bar { height: 20px; border-bottom: 0; }
.tree { flex: 1; background: #fff; font-family: "Noto Sans CJK KR", sans-serif; }
.root { height: 18px; display: flex; align-items: center; gap: 4px; }
.opt { height: 18px; display: flex; align-items: center; padding-left: 21px; }
.opt input { appearance: none; width: 12px; height: 12px; border: 1px solid #333; border-right-color: #aaa; border-bottom-color: #aaa; border-radius: 50%; background: #fff; }
.opt input:checked { background: radial-gradient(#222 2px, #fff 3px); }
.opt span { margin-left: 5px; padding: 0 2px; }
.opt .sel { background: #eee; }
.foot { height: 21px; display: flex; align-items: center; gap: 4px; padding-left: 5px; }
.foot span { margin-right: 4px; }
.foot button { width: 41px; height: 18px; background: linear-gradient(#fff, #f0f0f0); border-radius: 3px; color: #aaa; }

.chart { flex: 1; min-width: 0; margin-left: 3px; background: #eee; border: 1px solid #808088; }
.sheet { width: 100%; height: auto; }
.num { font-family: var(--kr); font-size: 12px; white-space: pre; }
.wide { font-size: 13px; }
.tag { font-family: "Liberation Sans", sans-serif; font-size: 12px; }
.hi { fill: #d01020; }
.lo { fill: #0c0cb0; }
.line { fill: none; stroke-width: 1; }
.strip { display: flex; align-items: center; height: 17px; background: #f2f2f2; }
.strip > button { width: 16px; height: 16px; background: #dcdcd8; border: 1px solid #888; border-top-color: #eee; color: #444; font-size: 12px; line-height: 14px; }
.strip > .arrow { width: 17px; color: #000; }
.track { flex: 1; height: 16px; }
.thumb { width: 118px; height: 16px; margin-left: auto; background: #eee; border: 1px solid #777; border-top-color: #ddd; border-left-color: #ddd; }
.ruler { width: 62px; height: 15px; margin: 0 4px 0 5px; background: repeating-linear-gradient(to right, #222 0 1px, transparent 1px 5px) bottom / 100% 4px no-repeat; }
.ruler input { appearance: none; display: block; width: 60px; height: 8px; background: linear-gradient(#888, #888) center / 100% 1px no-repeat; }
.ruler input::-webkit-slider-thumb { appearance: none; width: 3px; height: 8px; background: #eee; border: 1px solid #666; }
.ctrl { display: flex; background: #dcdcd8; height: 17px; align-items: center; }
.ctrl + .ctrl { padding-left: 16px; }
.ctrl button { width: 16px; height: 16px; color: #444; font: bold 11px "Liberation Sans", sans-serif; }

.rail { width: 28px; margin-left: 3px; display: flex; flex-direction: column; }
.rail + .rail { margin-left: 2px; }
.step { height: 25px; display: flex; flex-direction: column; margin-bottom: 3px; border: 1px solid #888; }
.step button { flex: 1; background: linear-gradient(90deg, #d8d8d8, #fff); border-bottom: 1px solid #888; }
.step button:last-child { border-bottom: 0; }
.list { flex: 1; background: #eee; border: 1px solid #888; display: flex; flex-direction: column; align-items: stretch; }
.q { height: 22px; flex-direction: column; background: linear-gradient(90deg, #fff, #d4d4d4); font: bold 10px/10px var(--kr); }
.t { height: 22px; background: linear-gradient(90deg, #fff, #d4d4d4); }
.t text { font-family: Roboto, sans-serif; }
.t.on { background: #fff; border: 1px solid #999; border-radius: 2px; }
.t.sep { height: 27px; padding-top: 4px; border-top: 1px solid #999; }
</style>
